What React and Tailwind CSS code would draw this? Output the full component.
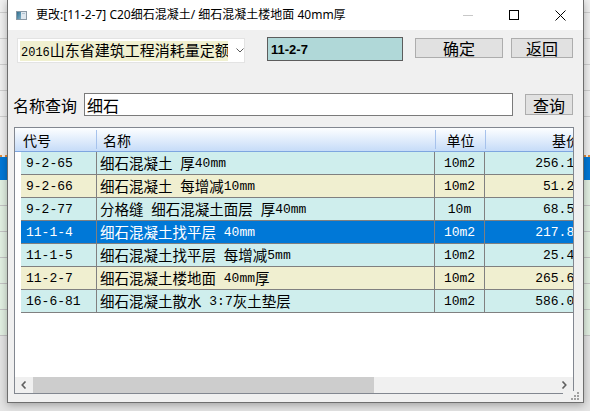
import React from "react";

const CJK = /([\u3000-\u9fff\uff00-\uffef]+)/;

// splits latin / cjk runs so the grid can mimic the half-width bitmap look
function Mixed({ text, cjk }) {
  return text.split(CJK).map((part, i) =>
    i % 2 === 1 ? (
      <span key={i} className={cjk}>
        {part}
      </span>
    ) : (
      <span key={i}>{part}</span>
    )
  );
}

const rows = [
  { code: "9-2-65", name: "细石混凝土 厚40mm", unit: "10m2", price: "256.14", tone: "teal" },
  { code: "9-2-66", name: "细石混凝土 每增减10mm", unit: "10m2", price: "51.20", tone: "beige" },
  { code: "9-2-77", name: "分格缝 细石混凝土面层 厚40mm", unit: "10m", price: "68.52", tone: "teal" },
  { code: "11-1-4", name: "细石混凝土找平层 40mm", unit: "10m2", price: "217.86", tone: "sel" },
  { code: "11-1-5", name: "细石混凝土找平层 每增减5mm", unit: "10m2", price: "25.43", tone: "teal" },
  { code: "11-2-7", name: "细石混凝土楼地面 40mm厚", unit: "10m2", price: "265.60", tone: "beige" },
  { code: "16-6-81", name: "细石混凝土散水 3:7灰土垫层", unit: "10m2", price: "586.05", tone: "teal" },
];

const tones = {
  teal: "bg-[#cfeeed] text-black",
  beige: "bg-[#f0efd0] text-black",
  sel: "bg-[#0078d7] text-white",
};

function BackdropStrip({ width }) {
  return (
    <div className={`${width} h-full shrink-0 flex flex-col bg-[#f0f0f0]`}>
      <div className="h-[13px] border-b border-[#cfcfcf]" />
      <div className="h-[26px] border-b border-[#cfcfcf]" />
      <div className="h-[26px] border-b border-[#cfcfcf]" />
      <div className="h-[26px] border-b border-[#cfcfcf]" />
      <div className="h-[26px] border-b border-[#cfcfcf]" />
      <div className="h-[40px] border-b-2 border-dotted border-[#e08a3c]" />
      <div className="h-[23px] bg-[#0078d7]" />
      <div className="h-[26px] bg-[#e2f0e2] border-b border-[#c4c4c4]" />
      <div className="h-[26px] bg-[#e2f0e2] border-b border-[#c4c4c4]" />
      <div className="h-[26px] bg-[#e2f0e2] border-b border-[#c4c4c4]" />
      <div className="h-[26px] bg-[#e2f0e2] border-b border-[#c4c4c4]" />
      <div className="h-[26px] bg-[#e2f0e2] border-b border-[#c4c4c4]" />
      <div className="h-[26px] bg-[#e2f0e2] border-b border-[#c4c4c4]" />
      <div className="flex-1 bg-[#e4e4e4]" />
    </div>
  );
}

function TitleBar() {
  return (
    <div className="h-[30px] shrink-0 bg-white flex items-center">
      <svg width="11" height="9" viewBox="0 0 11 9" className="ml-[8px]">
        <defs>
          <linearGradient id="ic" x1="0" y1="0" x2="1" y2="1">
            <stop offset="0" stopColor="#2f6d8c" />
            <stop offset="1" stopColor="#7fb0c8" />
          </linearGradient>
        </defs>
        <rect x="0.5" y="0.5" width="10" height="8" fill="#dfe7ee" stroke="#8a98a4" />
        <rect x="1" y="1" width="4" height="7" fill="url(#ic)" />
        <rect x="6" y="2" width="3" height="1" fill="#b0c2d0" />
      </svg>
      <div className="ml-[9px] text-[12px] text-black whitespace-pre font-['Noto_Sans','Noto_Sans_CJK_SC',sans-serif] leading-none">
        更改:[11-2-7] C20细石混凝土/ 细石混凝土楼地面 40mm厚
      </div>
      <div className="ml-auto flex h-full">
        <div className="w-[46px] flex items-center justify-center">
          <div className="w-[10px] h-px bg-[#c8c8c8]" />
        </div>
        <div className="w-[46px] flex items-center justify-center">
          <div className="w-[10px] h-[10px] border border-black" />
        </div>
        <div className="w-[46px] flex items-center justify-center">
          <svg width="11" height="11" viewBox="0 0 11 11">
            <path d="M0.5 0.5 L10.5 10.5 M10.5 0.5 L0.5 10.5" stroke="#000" strokeWidth="1" />
          </svg>
        </div>
      </div>
    </div>
  );
}

function Button({ label, w, h }) {
  return (
    <div
      className={`${w} ${h} bg-[#e1e1e1] border border-[#adadad] flex items-center justify-center text-[16px] leading-none text-black font-['Noto_Sans_CJK_SC',sans-serif]`}
    >
      {label}
    </div>
  );
}

function HeaderDivider() {
  return <div className="w-px h-[19px] bg-[#a6c2ec] shrink-0" />;
}

function Grid() {
  return (
    <div className="ml-[6px] mt-[11px] w-[560px] h-[267px] border border-[#828790] bg-white flex flex-col overflow-hidden">
      <div className="h-[24px] shrink-0 flex items-center border-b border-[#7ea6e0] bg-gradient-to-b from-[#fdfeff] to-[#c6dcf8] text-[14px] leading-none text-black font-['Noto_Sans_CJK_SC',sans-serif]">
        <div className="w-[81px] pl-[8px] shrink-0">代号</div>
        <HeaderDivider />
        <div className="w-[338px] pl-[6px] shrink-0">名称</div>
        <HeaderDivider />
        <div className="w-[49px] text-center shrink-0">单位</div>
        <HeaderDivider />
        <div className="w-[100px] pr-[6px] text-right shrink-0">基价</div>
      </div>

      <div className="flex flex-col pl-[6px]">
        {rows.map((r) => (
          <div
            key={r.code}
            className={`h-[23px] w-[580px] shrink-0 flex border-b border-[#808080] whitespace-pre leading-none text-[13px] font-['Liberation_Mono','Noto_Sans_CJK_SC',monospace] ${tones[r.tone]}`}
          >
            <div className="w-[76px] shrink-0 pl-[5px] flex items-center border-r border-[#808080]">
              {r.code}
            </div>
            <div className="w-[338px] shrink-0 pl-[3px] flex items-center border-r border-[#808080]">
              <Mixed text={r.name} cjk="text-[14.5px] font-['Noto_Sans_CJK_SC',sans-serif]" />
            </div>
            <div className="w-[50px] shrink-0 flex items-center justify-center border-r border-[#808080]">
              {r.unit}
            </div>
            <div className="w-[100px] shrink-0 pr-[3px] flex items-center justify-end">{r.price}</div>
          </div>
        ))}
      </div>

      <div className="flex-1" />

      <div className="h-[16px] shrink-0 flex bg-[#f0f0f0]">
        <div className="w-[18px] flex items-center justify-center">
          <svg width="6" height="8" viewBox="0 0 6 8">
            <path d="M4.5 0.5 L1.2 4 L4.5 7.5" fill="none" stroke="#606060" strokeWidth="1.6" />
          </svg>
        </div>
        <div className="w-[341px] bg-[#cdcdcd]" />
        <div className="flex-1" />
        <div className="w-[18px] flex items-center justify-center">
          <svg width="6" height="8" viewBox="0 0 6 8">
            <path d="M1.5 0.5 L4.8 4 L1.5 7.5" fill="none" stroke="#606060" strokeWidth="1.6" />
          </svg>
        </div>
      </div>
    </div>
  );
}

export default function App() {
  return (
    <div className="w-[590px] h-[411px] flex overflow-hidden bg-[#e4e4e4]">
      <BackdropStrip width="w-[7px]" />
      <div className="w-[577px] h-[403px] shrink-0 flex flex-col border-x border-b border-[#6e6e6e] bg-[#f0f0f0] shadow-[0_2px_8px_rgba(0,0,0,0.3)] relative z-10">
        <TitleBar />
        <div className="flex-1 flex flex-col relative">
          <div className="mt-[7px] h-[25px] flex items-start">
            <div className="ml-[9px] mt-[1px] w-[228px] h-[25px] bg-white border border-[#e3e3e3] flex items-center">
              <div className="ml-[2px] w-[208px] h-[20px] bg-[#f0f0d0] flex items-center overflow-hidden whitespace-pre leading-none text-[12px] text-black font-['Liberation_Mono','Noto_Sans_CJK_SC',monospace]">
                <span className="pl-[1px]">
                  <Mixed text="2016山东省建筑工程消耗量定额" cjk="text-[15px] font-['Noto_Sans_CJK_SC',sans-serif]" />
                </span>
              </div>
              <svg width="8" height="5" viewBox="0 0 8 5" className="ml-[8px]">
                <path d="M0.5 0.5 L4 4 L7.5 0.5" fill="none" stroke="#5a5a5a" strokeWidth="1" />
              </svg>
            </div>
            <div className="ml-[22px] w-[136px] h-[24px] bg-[#b0d8d8] border border-[#5c5c5c] flex items-center pl-[3px] text-[13px] font-bold leading-none text-black font-['Liberation_Sans',sans-serif]">
              11-2-7
            </div>
            <div className="ml-[12px] mt-[1px]">
              <Button label="确定" w="w-[88px]" h="h-[20px]" />
            </div>
            <div className="ml-[8px] mt-[1px]">
              <Button label="返回" w="w-[62px]" h="h-[20px]" />
            </div>
          </div>

          <div className="mt-[31px] h-[23px] flex items-center">
            <div className="ml-[5px] w-[64px] text-[16px] leading-none text-black font-['Noto_Sans_CJK_SC',sans-serif]">
              名称查询
            </div>
            <div className="ml-[7px] w-[429px] h-[23px] bg-white border border-[#7a7a7a] flex items-center pl-[2px] text-[16px] leading-none text-black font-['Noto_Sans_CJK_SC',sans-serif]">
              细石
            </div>
            <div className="ml-[12px]">
              <Button label="查询" w="w-[48px]" h="h-[21px]" />
            </div>
          </div>

          <Grid />

          <div className="absolute right-0 bottom-0 w-[20px] h-[11px] bg-[#f0f0f0] flex items-end justify-end pr-[4px] pb-[2px]">
            <svg width="8" height="8" viewBox="0 0 8 8">
              <rect x="6" y="0" width="2" height="2" fill="#a0a0a0" />
              <rect x="3" y="3" width="2" height="2" fill="#a0a0a0" />
              <rect x="6" y="3" width="2" height="2" fill="#a0a0a0" />
              <rect x="0" y="6" width="2" height="2" fill="#a0a0a0" />
              <rect x="3" y="6" width="2" height="2" fill="#a0a0a0" />
              <rect x="6" y="6" width="2" height="2" fill="#a0a0a0" />
            </svg>
          </div>
        </div>
      </div>
      <BackdropStrip width="flex-1" />
    </div>
  );
}
